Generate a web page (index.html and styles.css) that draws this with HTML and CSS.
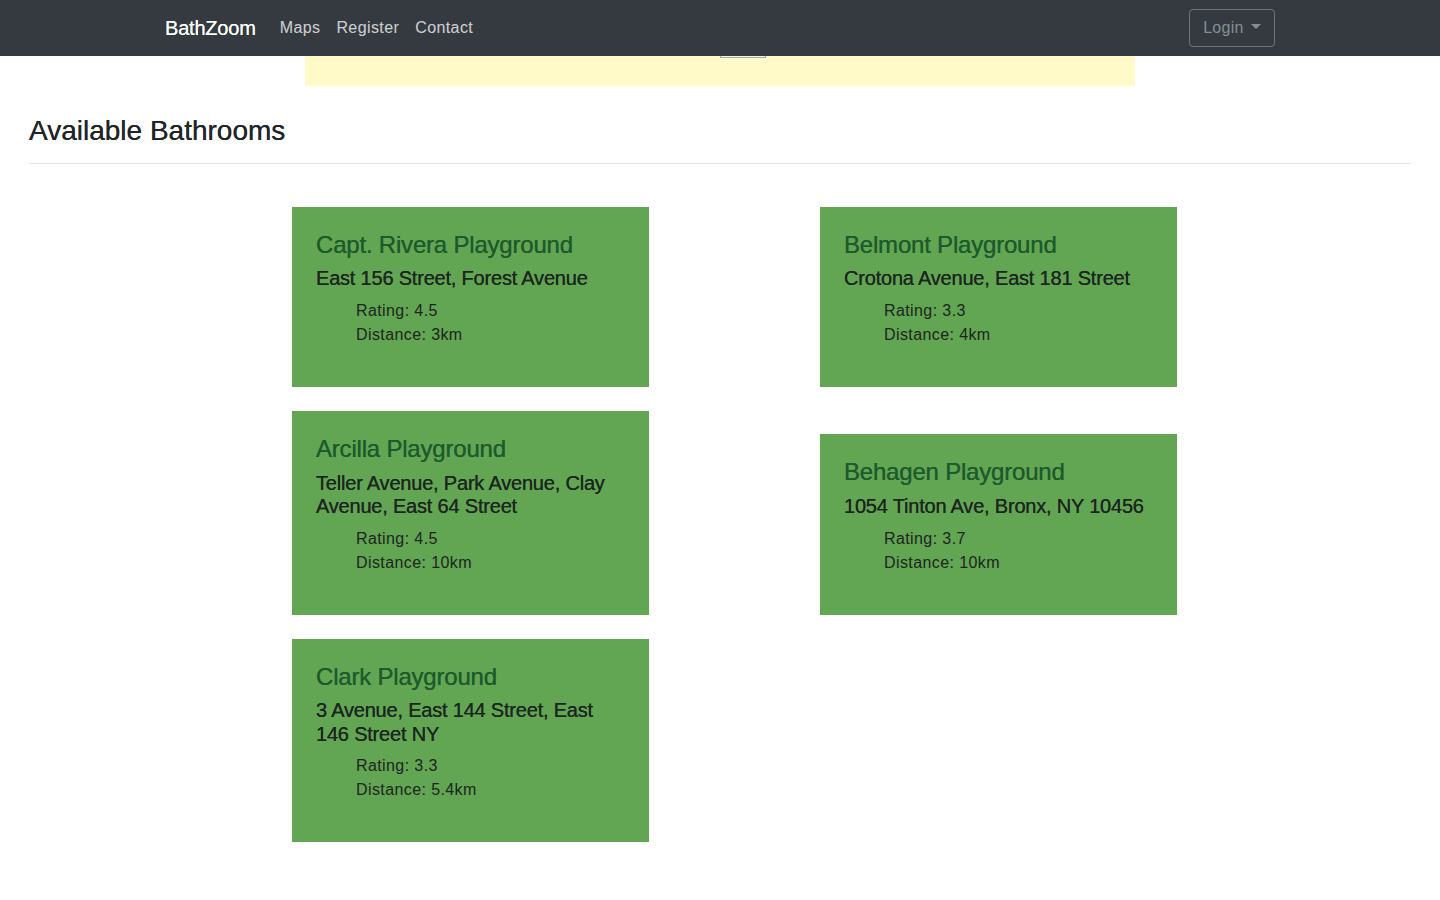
FILE: index.html
```html
<!DOCTYPE html>
<html lang="en">
<head>
<meta charset="utf-8">
<title>BathZoom</title>
<link rel="stylesheet" href="styles.css">
</head>
<body>
<nav class="navbar">
  <div class="nav-inner">
    <div class="nav-left">
      <a class="brand" href="#">BathZoom</a>
      <ul class="nav-links">
        <li><a href="#">Maps</a></li>
        <li><a href="#">Register</a></li>
        <li><a href="#">Contact</a></li>
      </ul>
    </div>
    <button class="login-btn" type="button">Login<span class="caret"></span></button>
  </div>
</nav>

<div class="notice">
  <div class="notice-tab"></div>
</div>

<main class="content">
  <h3 class="page-title">Available Bathrooms</h3>
  <hr class="divider">

  <div class="grid">
    <div class="card">
      <h4 class="card-title">Capt. Rivera Playground</h4>
      <h5 class="card-address">East 156 Street, Forest Avenue</h5>
      <ul class="card-info">
        <li>Rating: 4.5</li>
        <li>Distance: 3km</li>
      </ul>
    </div>
    <div class="card">
      <h4 class="card-title">Belmont Playground</h4>
      <h5 class="card-address">Crotona Avenue, East 181 Street</h5>
      <ul class="card-info">
        <li>Rating: 3.3</li>
        <li>Distance: 4km</li>
      </ul>
    </div>
    <div class="card">
      <h4 class="card-title">Arcilla Playground</h4>
      <h5 class="card-address">Teller Avenue, Park Avenue, Clay Avenue, East 64 Street</h5>
      <ul class="card-info">
        <li>Rating: 4.5</li>
        <li>Distance: 10km</li>
      </ul>
    </div>
    <div class="card">
      <h4 class="card-title">Behagen Playground</h4>
      <h5 class="card-address">1054 Tinton Ave, Bronx, NY 10456</h5>
      <ul class="card-info">
        <li>Rating: 3.7</li>
        <li>Distance: 10km</li>
      </ul>
    </div>
    <div class="card">
      <h4 class="card-title">Clark Playground</h4>
      <h5 class="card-address">3 Avenue, East 144 Street, East 146 Street NY</h5>
      <ul class="card-info">
        <li>Rating: 3.3</li>
        <li>Distance: 5.4km</li>
      </ul>
    </div>
  </div>
</main>
</body>
</html>
```

FILE: styles.css
```css
* {
  box-sizing: border-box;
}

html, body {
  margin: 0;
  padding: 0;
}

body {
  font-family: "Liberation Sans", Arial, sans-serif;
  font-size: 16px;
  line-height: 1.5;
  color: #212529;
  background: #ffffff;
}

.navbar {
  background: #343a40;
  height: 56px;
}

.nav-inner {
  width: 1140px;
  margin: 0 auto;
  padding: 0 15px;
  height: 56px;
  display: flex;
  align-items: center;
  justify-content: space-between;
}

.nav-left {
  display: flex;
  align-items: center;
}

.brand {
  color: #ffffff;
  font-size: 20px;
  line-height: 30px;
  text-decoration: none;
  margin-right: 16px;
  letter-spacing: -0.2px;
  text-shadow: 0 0 0.4px #ffffff;
}

.nav-links {
  list-style: none;
  margin: 0;
  padding: 0;
  display: flex;
}

.nav-links a {
  display: block;
  padding: 8px 8px;
  color: rgba(255, 255, 255, 0.5);
  text-decoration: none;
  font-size: 16px;
  line-height: 24px;
  letter-spacing: 0.4px;
  text-shadow: 0 0 0.4px rgba(255, 255, 255, 0.5);
}

.login-btn {
  font-family: inherit;
  font-size: 16px;
  line-height: 24px;
  letter-spacing: 0.3px;
  height: 38px;
  width: 86px;
  padding: 6px 12px;
  color: #868e96;
  background: transparent;
  border: 1px solid #6c757d;
  border-radius: 4px;
  display: flex;
  align-items: center;
  justify-content: center;
}

.caret {
  display: inline-block;
  margin-left: 7px;
  margin-top: -3px;
  width: 0;
  height: 0;
  border-top: 5px solid #868e96;
  border-left: 5px solid transparent;
  border-right: 5px solid transparent;
}

.notice {
  width: 830px;
  height: 30px;
  margin: 0 auto;
  background: #fffac8;
}

.notice-tab {
  margin-left: 415px;
  width: 46px;
  height: 2px;
  border: 1px solid #a9a9a9;
  border-top: none;
  background: #f4f4f4;
}

.content {
  padding: 0 29px 60px;
}

.page-title {
  margin: 28px 0 0;
  font-size: 28px;
  font-weight: 500;
  line-height: 1.2;
  letter-spacing: 0;
  text-shadow: 0 0 0.4px #212529;
}

.divider {
  margin: 15px 0 0;
  border: 0;
  border-top: 1px solid rgba(0, 0, 0, 0.1);
}

.grid {
  margin: 43px 0 0 263px;
  display: grid;
  grid-template-columns: 357px 357px;
  column-gap: 171px;
  row-gap: 24px;
  align-items: end;
}

.card {
  background: #62a552;
  padding: 24px 24px 24px;
}

.card-title {
  margin: 0 0 8px;
  font-size: 24px;
  font-weight: 500;
  line-height: 1.2;
  color: #1e5a2c;
  letter-spacing: -0.2px;
  text-shadow: 0 0 0.4px #1e5a2c;
}

.card-address {
  margin: 0 0 8px;
  font-size: 20px;
  font-weight: 500;
  line-height: 23.5px;
  color: #1c2620;
  letter-spacing: -0.2px;
  text-shadow: 0 0 0.4px #1c2620;
}

.card-info {
  list-style: none;
  margin: 0 0 16px;
  padding-left: 40px;
  font-size: 16px;
  line-height: 24px;
  letter-spacing: 0.4px;
  color: #1c2620;
}
```
